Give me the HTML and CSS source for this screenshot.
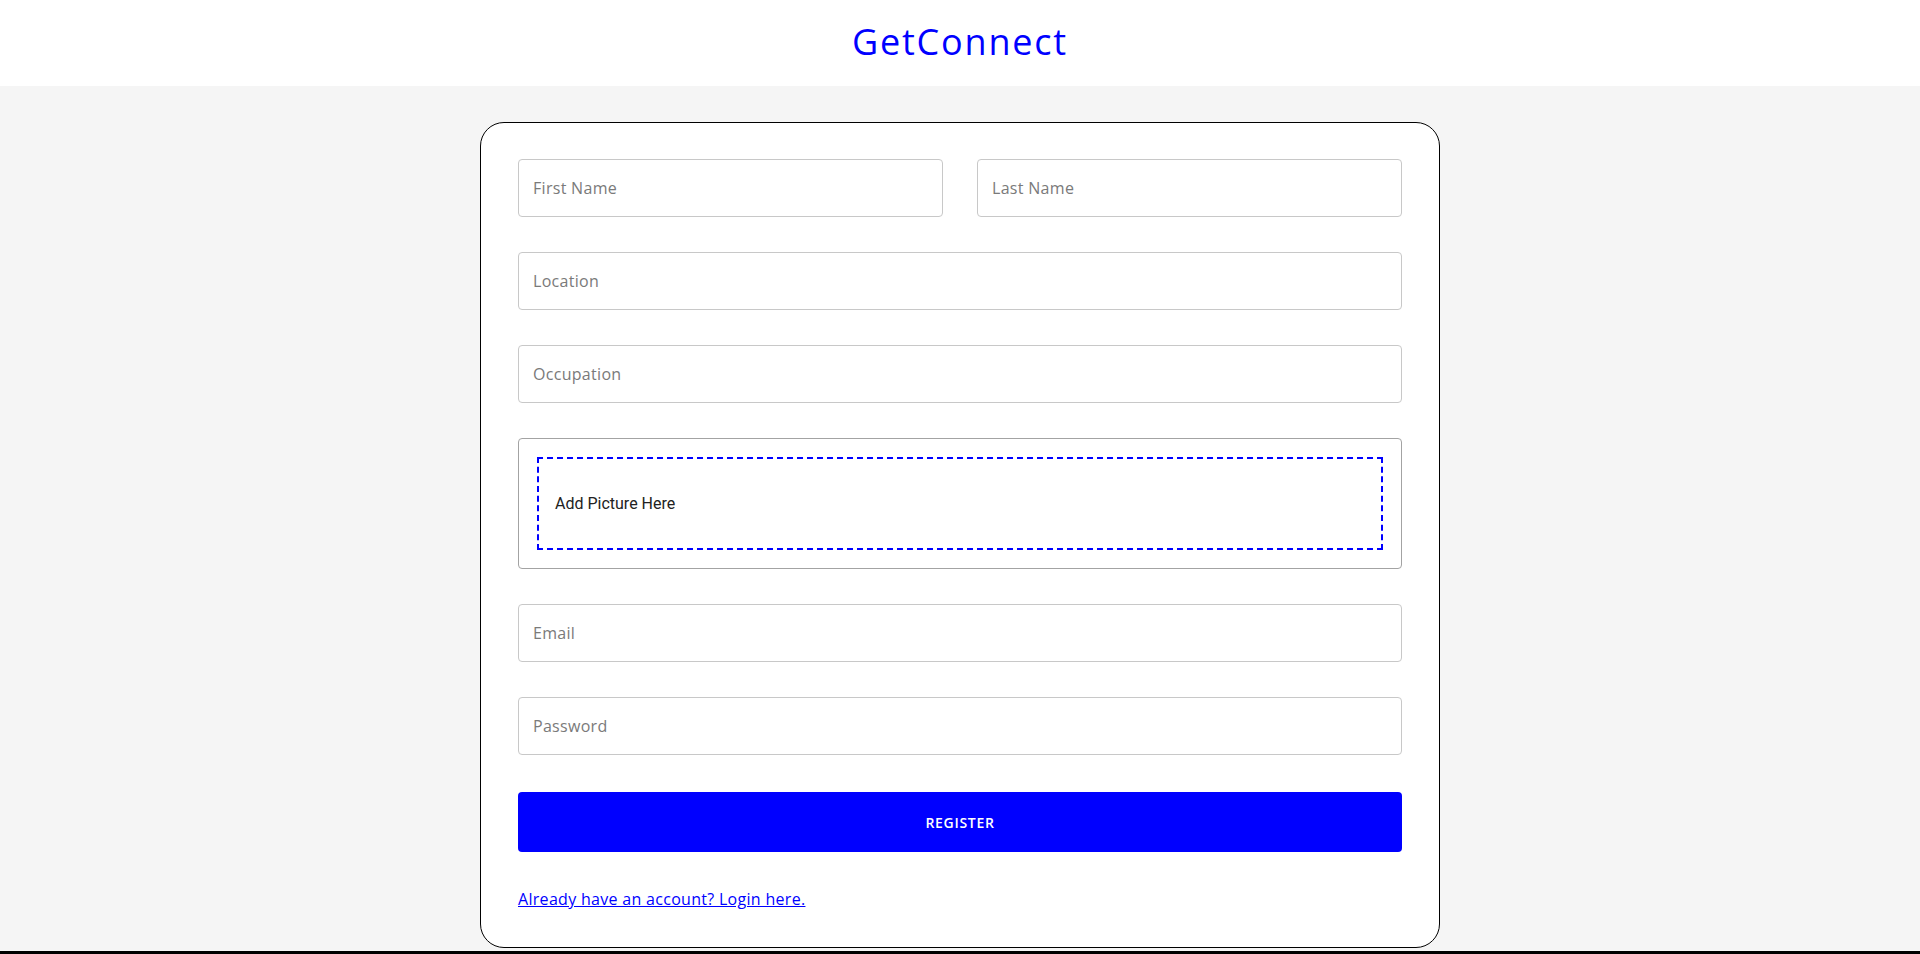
FILE: index.html
```html
<!DOCTYPE html>
<html lang="en">
<head>
<meta charset="utf-8">
<title>GetConnect - Register</title>
<link rel="stylesheet" href="styles.css">
</head>
<body>
  <header class="topbar">
    <h1 class="brand">GetConnect</h1>
  </header>
  <main class="page">
    <form class="card">
      <div class="row-two">
        <input class="field" type="text" placeholder="First Name">
        <input class="field" type="text" placeholder="Last Name">
      </div>
      <input class="field" type="text" placeholder="Location">
      <input class="field" type="text" placeholder="Occupation">
      <div class="picture-box">
        <div class="dropzone">
          <p class="dropzone-text">Add Picture Here</p>
        </div>
      </div>
      <input class="field" type="email" placeholder="Email">
      <input class="field" type="password" placeholder="Password">
      <button class="register" type="button">REGISTER</button>
      <a class="login-link" href="#">Already have an account? Login here.</a>
    </form>
    <div class="bottom-strip"></div>
  </main>
</body>
</html>
```

FILE: styles.css
```css
* {
  box-sizing: border-box;
}

html, body {
  margin: 0;
  padding: 0;
}

body {
  background: #f5f5f5;
  font-family: "Open Sans", "Liberation Sans", sans-serif;
  overflow: hidden;
}

.topbar {
  height: 86px;
  background: #ffffff;
  display: flex;
  align-items: center;
  justify-content: center;
  padding-bottom: 2px;
}

.brand {
  margin: 0;
  font-family: "Open Sans", "Liberation Sans", sans-serif;
  font-weight: 500;
  font-size: 36px;
  letter-spacing: 1.8px;
  line-height: 1;
  color: #0000ff;
}

.page {
  display: flex;
  flex-direction: column;
  align-items: center;
  padding-top: 36px;
}

.card {
  width: 960px;
  background: #ffffff;
  border: 1px solid #000000;
  border-radius: 24px;
  padding: 36px 37px 36px 37px;
  display: flex;
  flex-direction: column;
  gap: 35px;
}

.row-two {
  display: grid;
  grid-template-columns: 1fr 1fr;
  gap: 34px;
}

.field {
  display: block;
  width: 100%;
  height: 58px;
  border: 1px solid #c8c8c8;
  border-radius: 4px;
  padding: 0 14px;
  font-family: "Open Sans", "Liberation Sans", sans-serif;
  font-size: 16px;
  letter-spacing: 0.3px;
  color: #222;
  background: #fff;
  outline: none;
}

.field::placeholder {
  color: #7a7a7a;
}

.picture-box {
  border: 1px solid #a3a3a3;
  border-radius: 4px;
  padding: 18px;
}

.dropzone {
  border: 2px dashed #0000ff;
  height: 93px;
  display: flex;
  align-items: center;
  padding: 0 16px;
}

.dropzone-text {
  margin: 0;
  font-family: Roboto, "Liberation Sans", sans-serif;
  font-size: 16px;
  color: #222222;
}

.register {
  height: 60px;
  margin-top: 2px;
  border: none;
  border-radius: 4px;
  background: #0000ff;
  color: #ffffff;
  font-family: "Open Sans", "Liberation Sans", sans-serif;
  font-weight: 600;
  font-size: 14px;
  letter-spacing: 0.7px;
  cursor: pointer;
}

.login-link {
  align-self: flex-start;
  font-family: "Open Sans", "Liberation Sans", sans-serif;
  font-size: 16px;
  letter-spacing: 0.3px;
  line-height: 24px;
  color: #0000ff;
  text-decoration: underline;
}

.bottom-strip {
  width: 100%;
  height: 20px;
  margin-top: 3px;
  background: #000000;
}
```
